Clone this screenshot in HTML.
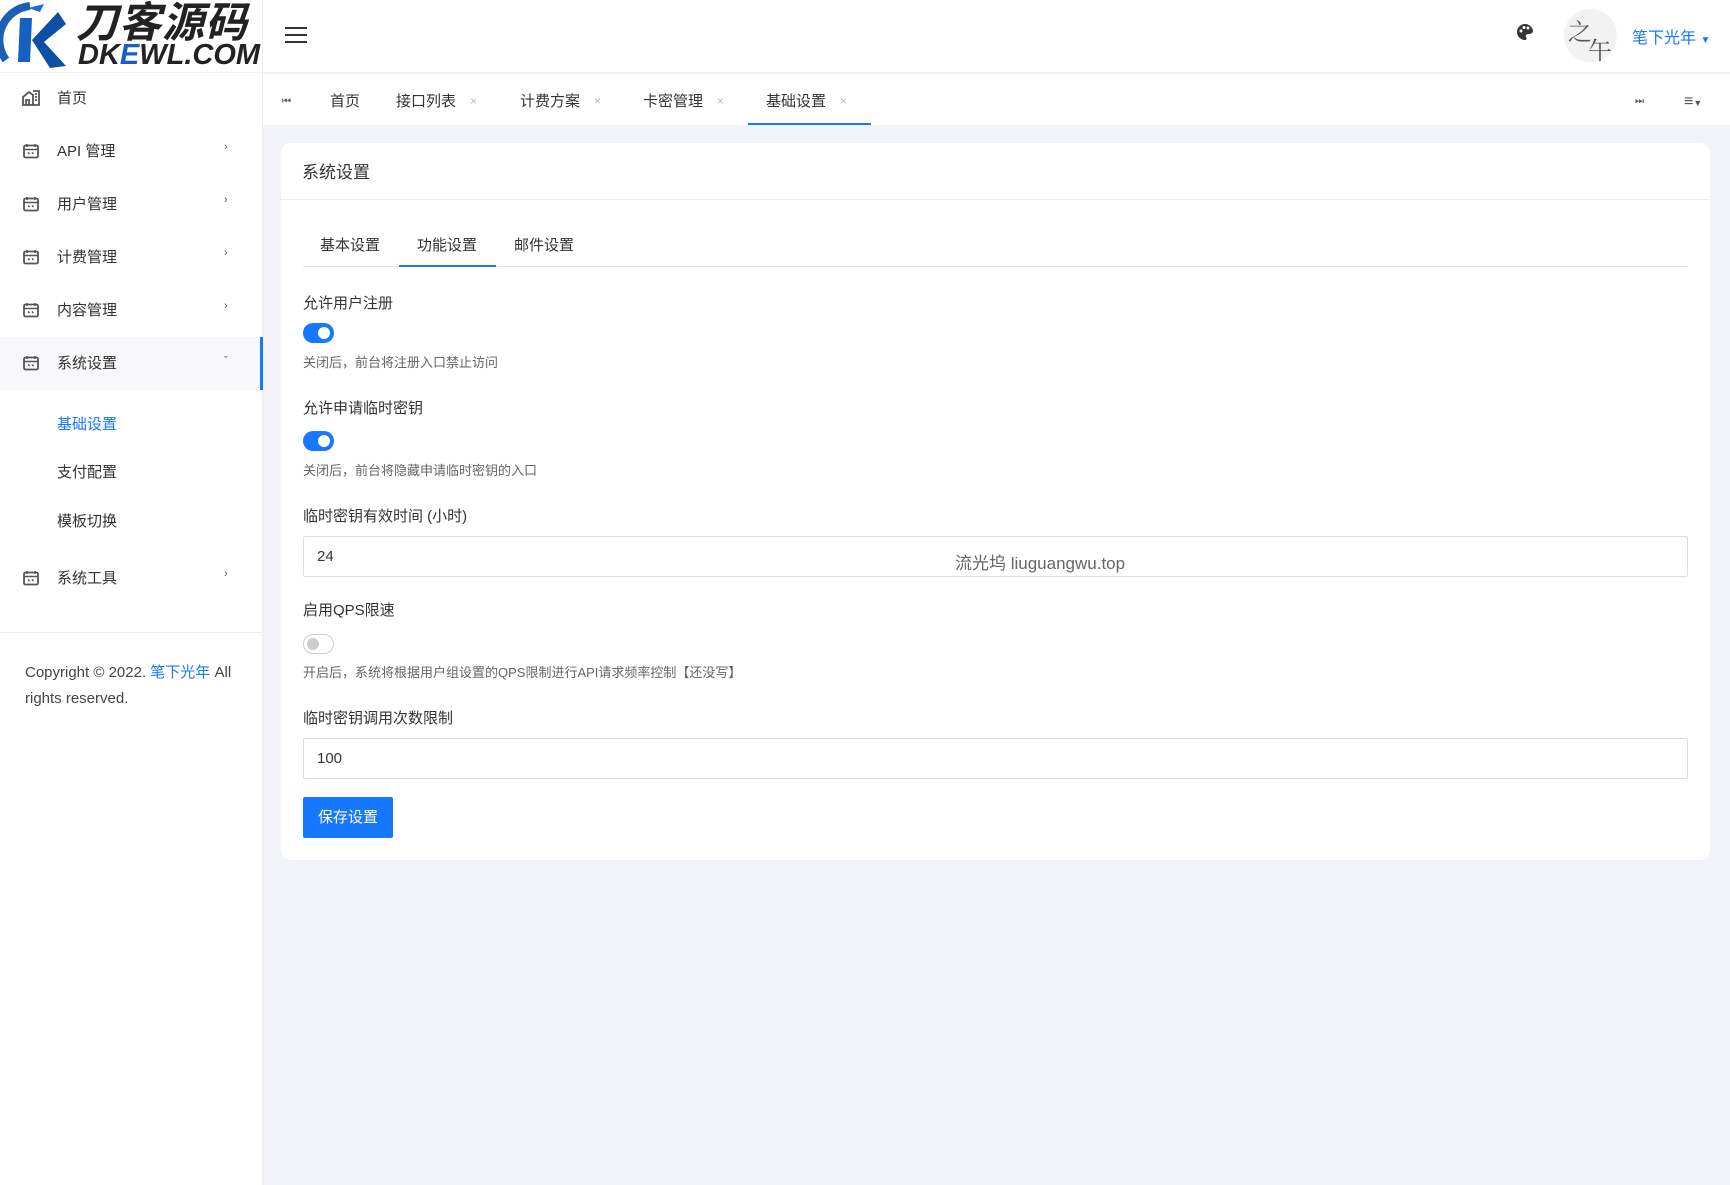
<!DOCTYPE html>
<html><head><meta charset="utf-8"><style>
*{box-sizing:border-box;margin:0;padding:0}
body{width:1730px;height:1185px;overflow:hidden;background:#f2f3f8;font-family:"Liberation Sans","Noto Sans CJK SC",sans-serif;color:#333;position:relative}
.abs{position:absolute}
.side{position:absolute;left:0;top:0;width:263px;height:1185px;background:#fff;border-right:1px solid #eceef3}
.hdr{position:absolute;left:263px;top:0;right:0;height:73px;background:#fff;border-bottom:1px solid #eee}
.tabs{position:absolute;left:263px;top:74px;right:0;height:51px;background:#fff}
.mi{position:absolute;left:0;width:262px;height:53px;font-size:15px;color:#333;line-height:53px}
.mi .ic{position:absolute;left:23px;top:18px}
.mi .t{position:absolute;left:57px}
.mi .ar{position:absolute;left:224px;font-size:11px;color:#555;top:-4px}
.sub{position:absolute;left:57px;font-size:15px;color:#333}
.card{position:absolute;left:281px;top:143px;width:1429px;height:717px;background:#fff;border-radius:10px}
.lbl{position:absolute;left:303px;font-size:15px;color:#333}
.help{position:absolute;left:303px;font-size:13px;color:#666}
.tg{position:absolute;left:303px;width:31px;height:20px;border-radius:10px;background:#1677ff}
.tg:after{content:"";position:absolute;right:4px;top:4px;width:12px;height:12px;border-radius:50%;background:#fff}
.tg.off{background:#fff;border:1px solid #ccc}
.tg.off:after{left:3px;top:3px;background:#ccc}
.inp{position:absolute;left:303px;width:1385px;height:41px;border:1px solid #ddd;border-radius:2px;font-size:15px;padding-left:13px;line-height:39px;color:#333}
.tb{position:absolute;top:2px;line-height:51px;font-size:15px;color:#333}
.x{position:absolute;top:2px;line-height:51px;font-size:12px;color:#bbb}
</style></head><body>
<svg width="0" height="0" style="position:absolute"><defs><g id="cal"><rect x="1" y="2.5" width="14" height="12" rx="1.5" stroke="#555" stroke-width="1.8" fill="none"/><path d="M4 1V4M12 1V4M1 6.5H15M5 9.5L6.5 11M9 9.5L10.5 11" stroke="#555" stroke-width="1.5"/></g></defs></svg>
<div class="side">
 <div class="abs" style="left:0;top:0;width:263px;height:73px;border-bottom:1px solid #f0f0f0">
  <svg width="70" height="72" style="position:absolute;left:0;top:0"><path d="M6 60 A34 34 0 0 1 30 6" stroke="#1a5fb4" stroke-width="8" fill="none"/><path d="M28 8 L44 4 L40 12" fill="#1a6fd0"/><path d="M20 18 L32 18 L30 62 L18 62Z" fill="#1560c0"/><path d="M32 40 L58 12 L66 24 L44 42 L66 66 L50 68Z" fill="#0d4fa6"/></svg>
  <div class="abs" style="left:76px;top:0;font-size:42px;font-weight:bold;font-style:italic;color:#222;letter-spacing:1px;line-height:46px">刀客源码</div>
  <div class="abs" style="left:78px;top:40px;font-size:29px;font-weight:bold;font-style:italic;color:#222;line-height:30px">DK<span style="color:#1560c0">E</span>WL.COM</div>
 </div>
 <div class="mi" style="top:72px"><svg class="abs" style="left:22px;top:18px" width="18" height="16"><path d="M1 15V7L7 2L11 5V15ZM11 1H17V15H11M4 15V10H7V15M13 4H15M13 7H15M13 10H15" stroke="#555" stroke-width="1.8" fill="none"/></svg><span class="t">首页</span></div>
 <div class="mi" style="top:125px"><svg class="ic" width="16" height="16"><use href="#cal"/></svg><span class="t">API 管理</span><span class="ar">›</span></div>
 <div class="mi" style="top:178px"><svg class="ic" width="16" height="16"><use href="#cal"/></svg><span class="t">用户管理</span><span class="ar">›</span></div>
 <div class="mi" style="top:231px"><svg class="ic" width="16" height="16"><use href="#cal"/></svg><span class="t">计费管理</span><span class="ar">›</span></div>
 <div class="mi" style="top:284px"><svg class="ic" width="16" height="16"><use href="#cal"/></svg><span class="t">内容管理</span><span class="ar">›</span></div>
 <div class="mi" style="top:337px;background:#f8f8fa;border-right:3px solid #1677ff;width:263px"><svg class="ic" width="16" height="16"><use href="#cal"/></svg><span class="t">系统设置</span><span class="ar" style="top:-2px">ˇ</span></div>
 <div class="sub" style="top:413px;color:#1677ff">基础设置</div>
 <div class="sub" style="top:461px">支付配置</div>
 <div class="sub" style="top:510px">模板切换</div>
 <div class="mi" style="top:552px"><svg class="ic" width="16" height="16"><use href="#cal"/></svg><span class="t">系统工具</span><span class="ar">›</span></div>
 <div class="abs" style="left:0;top:632px;width:262px;height:1px;background:#eee"></div>
 <div class="abs" style="left:25px;top:660px;width:225px;font-size:15px;line-height:26px;color:#444">Copyright © 2022. <span style="color:#1677ff">笔下光年</span> All rights reserved.</div>
</div>
<div class="hdr">
 <div class="abs" style="left:22px;top:27px;width:22px;height:2px;background:#333;box-shadow:0 7px 0 #333,0 14px 0 #333"></div>
 <svg class="abs" style="left:1253px;top:23px" width="18" height="18"><path d="M9 1A8 8 0 0 0 9 17C11 17 11 15 10 14C9 12 11 11 13 11C16 11 17 9 17 8A8 8 0 0 0 9 1Z" fill="#333"/><circle cx="5" cy="8" r="1.5" fill="#fff"/><circle cx="8" cy="4.5" r="1.5" fill="#fff"/><circle cx="12" cy="5" r="1.5" fill="#fff"/></svg>
 <div class="abs" style="left:1301px;top:9px;width:53px;height:53px;border-radius:50%;background:#f2f2f2;font-size:24px;color:#555;font-family:'Noto Serif CJK SC',serif"><span class="abs" style="left:4px;top:3px">之</span><span class="abs" style="left:24px;top:22px">午</span></div>
 <div class="abs" style="left:1369px;top:24px;font-size:16px;color:#1677ff">笔下光年 <span style="font-size:10px">▼</span></div>
</div>
<div class="tabs">
 <div class="tb" style="left:19px;font-size:10px;color:#555">⏮</div>
 <div class="tb" style="left:67px">首页</div>
 <div class="tb" style="left:133px">接口列表</div><div class="x" style="left:207px">×</div>
 <div class="tb" style="left:257px">计费方案</div><div class="x" style="left:331px">×</div>
 <div class="tb" style="left:380px">卡密管理</div><div class="x" style="left:454px">×</div>
 <div class="tb" style="left:503px">基础设置</div><div class="x" style="left:577px">×</div>
 <div class="abs" style="left:485px;top:49px;width:123px;height:2px;background:#1677ff"></div>
 <div class="tb" style="left:1372px;font-size:10px;color:#555">⏭</div>
 <div class="tb" style="left:1421px;font-size:16px;color:#555">≡<span style="font-size:9px">▼</span></div>
</div>
<div class="card">
 <div class="abs" style="left:21px;top:15px;font-size:17px;color:#333">系统设置</div>
 <div class="abs" style="left:0;top:56px;width:100%;height:1px;background:#eee"></div>
 <div class="abs" style="left:22px;top:123px;width:1385px;height:1px;background:#e8e8e8"></div>
 <div class="abs" style="left:39px;top:91px;font-size:15px">基本设置</div>
 <div class="abs" style="left:136px;top:91px;font-size:15px">功能设置</div>
 <div class="abs" style="left:233px;top:91px;font-size:15px">邮件设置</div>
 <div class="abs" style="left:118px;top:122px;width:97px;height:2px;background:#1677ff"></div>
</div>
<div class="lbl" style="top:292px">允许用户注册</div>
<div class="tg" style="top:323px"></div>
<div class="help" style="top:352px">关闭后，前台将注册入口禁止访问</div>
<div class="lbl" style="top:397px">允许申请临时密钥</div>
<div class="tg" style="top:431px"></div>
<div class="help" style="top:460px">关闭后，前台将隐藏申请临时密钥的入口</div>
<div class="lbl" style="top:505px">临时密钥有效时间 (小时)</div>
<div class="inp" style="top:536px">24</div>
<div class="abs" style="left:955px;top:549px;font-size:17px;color:#666">流光坞 liuguangwu.top</div>
<div class="lbl" style="top:599px">启用QPS限速</div>
<div class="tg off" style="top:634px"></div>
<div class="help" style="top:662px">开启后，系统将根据用户组设置的QPS限制进行API请求频率控制【还没写】</div>
<div class="lbl" style="top:707px">临时密钥调用次数限制</div>
<div class="inp" style="top:738px">100</div>
<div class="abs" style="left:303px;top:797px;width:90px;height:41px;background:#1677ff;color:#fff;font-size:15px;line-height:41px;text-align:center;border-radius:2px">保存设置</div>
</body></html>
